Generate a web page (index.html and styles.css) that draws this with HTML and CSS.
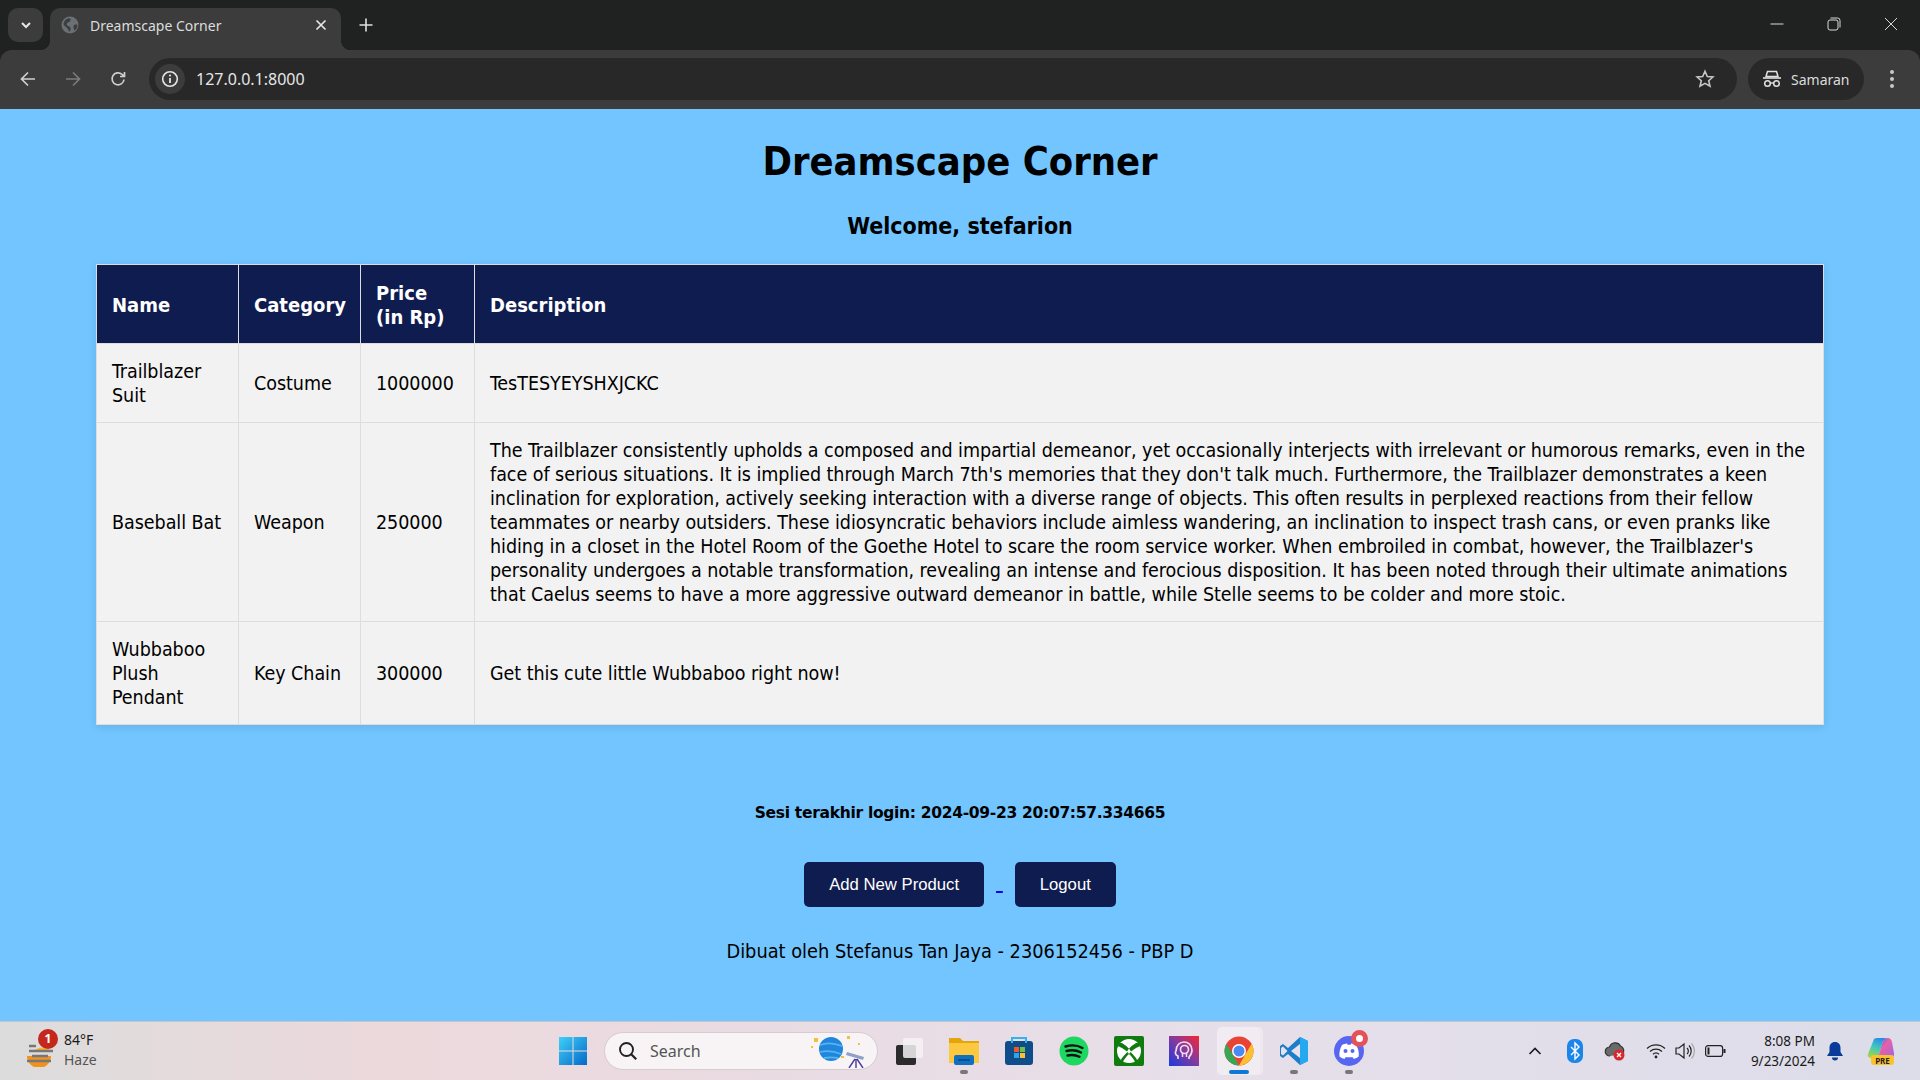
FILE: index.html
```html
<!DOCTYPE html>
<html lang="en">
<head>
<meta charset="utf-8">
<title>Dreamscape Corner</title>
<link rel="stylesheet" href="styles.css">
</head>
<body>
<header class="chrome">
  <div class="tabstrip">
    <button class="tab-search"><svg width="14" height="14" viewBox="0 0 14 14"><path d="M3 5l4 4 4-4" fill="none" stroke="#e6e6e6" stroke-width="2"/></svg></button>
    <div class="tab">
      <svg class="favicon" width="18" height="18" viewBox="0 0 18 18"><circle cx="9" cy="9" r="8.500" fill="#6b7074"/><path d="M7 2.500c2-.5 3 .5 2.500 2s-2.500 1.500-3.500 3 1 2.500 2.500 3 1.500 2.500.5 5H8c-.5-2-1.500-3-2.500-4S3 10 2.500 8C3 5 4.500 3 7 2.500zM13 9c1.500-.7 2.500-.5 3.500 0 0 2.500-1 4.500-3 5.500-1-1.500-1.500-4-.5-5.500z" fill="#3c3f42"/></svg>
      <span class="tab-title">Dreamscape Corner</span>
      <svg class="tab-close" width="12" height="12" viewBox="0 0 12 12"><path d="M1.500 1.500l9 9m0-9l-9 9" stroke="#e6e6e6" stroke-width="1.700"/></svg>
    </div>
    <svg class="newtab" width="14" height="14" viewBox="0 0 14 14"><path d="M7 .5v13M.5 7h13" stroke="#e0e0e0" stroke-width="1.600"/></svg>
    <div class="winctl">
      <svg width="14" height="14" viewBox="0 0 14 14"><path d="M.5 7h13" stroke="#d8d8d8"/></svg>
      <svg width="14" height="14" viewBox="0 0 14 14"><rect x="1" y="3" width="10" height="10" rx="2" fill="none" stroke="#d8d8d8"/><path d="M3.500 1h7A2.500 2.500 0 0 1 13 3.500v7" fill="none" stroke="#d8d8d8"/></svg>
      <svg width="14" height="14" viewBox="0 0 14 14"><path d="M1 1l12 12m0-12L1 13" stroke="#d8d8d8"/></svg>
    </div>
  </div>
  <div class="toolbar">
    <svg class="nav-ic" width="18" height="18" viewBox="0 0 18 18"><path d="M16 9H2.500M9 2.500L2.500 9 9 15.500" fill="none" stroke="#cfcfcf" stroke-width="1.700"/></svg>
    <svg class="nav-ic" width="18" height="18" viewBox="0 0 18 18"><path d="M2 9h13.500M9 2.500L15.500 9 9 15.500" fill="none" stroke="#7b7b7b" stroke-width="1.700"/></svg>
    <svg class="nav-ic" width="18" height="18" viewBox="0 0 18 18"><path d="M15 9.500a6 6 0 1 1-2-5.200L15 6.200M15.500 2v4.500H11" fill="none" stroke="#cfcfcf" stroke-width="1.700"/></svg>
    <div class="omnibox">
      <span class="site-info"><svg width="18" height="18" viewBox="0 0 18 18"><circle cx="9" cy="9" r="7.300" fill="none" stroke="#e6e6e6" stroke-width="1.600"/><path d="M9 8v5" stroke="#e6e6e6" stroke-width="1.800"/><circle cx="9" cy="5.500" r="1.100" fill="#e6e6e6"/></svg></span>
      <span class="url">127.0.0.1:8000</span>
      <svg class="star" width="20" height="20" viewBox="0 0 20 20"><path d="M10 2.300l2.300 5.200 5.600.5-4.200 3.700 1.300 5.500L10 14.400l-5 2.800 1.300-5.500L2.100 8l5.600-.5z" fill="none" stroke="#c7c7c7" stroke-width="1.600"/></svg>
    </div>
    <div class="incognito">
      <svg width="20" height="20" viewBox="0 0 20 20"><path d="M5.500 2.500h9l1.500 5h-12z" fill="none" stroke="#e0e0e0" stroke-width="1.500"/><path d="M1 9h18" stroke="#e0e0e0" stroke-width="1.600"/><circle cx="5.500" cy="14.500" r="2.800" fill="none" stroke="#e0e0e0" stroke-width="1.500"/><circle cx="14.500" cy="14.500" r="2.800" fill="none" stroke="#e0e0e0" stroke-width="1.500"/><path d="M8.300 14h3.400" stroke="#e0e0e0" stroke-width="1.400"/></svg>
      <span>Samaran</span>
    </div>
    <svg class="kebab" width="6" height="20" viewBox="0 0 6 20"><circle cx="3" cy="3" r="2" fill="#c8c8c8"/><circle cx="3" cy="10" r="2" fill="#c8c8c8"/><circle cx="3" cy="17" r="2" fill="#c8c8c8"/></svg>
  </div>
</header>

<main class="page">
  <h1 class="title">Dreamscape Corner</h1>
  <h2 class="welcome">Welcome, stefarion</h2>
  <table class="products">
    <colgroup><col class="c-name"><col class="c-cat"><col class="c-price"><col></colgroup>
    <thead>
      <tr><th>Name</th><th>Category</th><th>Price<br>(in Rp)</th><th>Description</th></tr>
    </thead>
    <tbody>
      <tr><td>Trailblazer<br>Suit</td><td>Costume</td><td>1000000</td><td>TesTESYEYSHXJCKC</td></tr>
      <tr><td>Baseball Bat</td><td>Weapon</td><td>250000</td><td>The Trailblazer consistently upholds a composed and impartial demeanor, yet occasionally interjects with irrelevant or humorous remarks, even in the<br>face of serious situations. It is implied through March 7th's memories that they don't talk much. Furthermore, the Trailblazer demonstrates a keen<br>inclination for exploration, actively seeking interaction with a diverse range of objects. This often results in perplexed reactions from their fellow<br>teammates or nearby outsiders. These idiosyncratic behaviors include aimless wandering, an inclination to inspect trash cans, or even pranks like<br>hiding in a closet in the Hotel Room of the Goethe Hotel to scare the room service worker. When embroiled in combat, however, the Trailblazer's<br>personality undergoes a notable transformation, revealing an intense and ferocious disposition. It has been noted through their ultimate animations<br>that Caelus seems to have a more aggressive outward demeanor in battle, while Stelle seems to be colder and more stoic.</td></tr>
      <tr><td>Wubbaboo<br>Plush<br>Pendant</td><td>Key Chain</td><td>300000</td><td>Get this cute little Wubbaboo right now!</td></tr>
    </tbody>
  </table>
  <p class="session">Sesi terakhir login: 2024-09-23 20:07:57.334665</p>
  <div class="actions"><a class="link-wrap first" href="#"><button class="btn">Add New Product</button> </a><a class="link-wrap second" href="#"><button class="btn">Logout</button></a></div>
  <p class="credit">Dibuat oleh Stefanus Tan Jaya - 2306152456 - PBP D</p>
</main>

<footer class="taskbar">
  <div class="weather">
    <span class="weather-ic">
      <svg width="32" height="32" viewBox="0 0 32 32"><path d="M4 21h24a11 11 0 0 1-24 0z" fill="#f0921e"/><path d="M12 15a13 13 0 0 1 15 0z" fill="#f7b233"/><path d="M6 11h7M6 16h24M9 21h16M4 26h24" stroke="#777" stroke-width="2.600"/></svg>
      <span class="badge">1</span>
    </span>
    <div class="weather-text"><span>84°F</span><span class="muted">Haze</span></div>
  </div>
  <div class="taskcenter">
    <span class="ti"><svg width="30" height="30" viewBox="0 0 30 30"><defs><linearGradient id="w" x1="0" y1="0" x2="1" y2="1"><stop offset="0" stop-color="#3fd0f8"/><stop offset="1" stop-color="#0568c8"/></linearGradient></defs><path fill="url(#w)" d="M1 1h13.500v13.500H1zM15.500 1H29v13.500H15.500zM1 15.500h13.500V29H1zM15.500 15.500H29V29H15.500z"/></svg></span>
    <div class="searchbox">
      <svg width="20" height="20" viewBox="0 0 20 20"><circle cx="8.500" cy="8.500" r="6.500" fill="none" stroke="#222" stroke-width="1.900"/><path d="M13.200 13.200l5 5" stroke="#222" stroke-width="2.200"/></svg>
      <span class="searchlabel">Search</span>
      <svg class="search-art" width="56" height="34" viewBox="0 0 56 34"><circle cx="20" cy="15" r="12" fill="#1f86dc"/><path d="M9 11c8-3 14-2 22 1M9 18c8-2 14-1 21 2M13 24c5-1 9-1 14 0" fill="none" stroke="#58b2f0" stroke-width="1.800"/><path d="M3 4h4v4H3zM36 2l3 0 0 3-3 0zM47 9h2v2h-2zM30 22h3v2h-3zM0 12h2v2H0z" fill="#eec23e"/><path d="M36 18l17 5-1 3-17-5z" fill="#8fa0c8"/><path d="M44 25l-6 9M45 25v9M46 25l6 9" stroke="#4a3a9a" stroke-width="1.400"/></svg>
    </div>
    <span class="ti"><svg width="30" height="30" viewBox="0 0 30 30"><rect x="2" y="9" width="20" height="20" rx="2" fill="#2b2b2b"/><rect x="9" y="2" width="20" height="20" rx="2" fill="#f4f2f4" fill-opacity=".85"/></svg></span>
    <span class="ti"><svg width="32" height="32" viewBox="0 0 32 32"><path d="M1 3h11l3 3h16v6H1z" fill="#e3a40c"/><path d="M1 8h30v20H1z" fill="#fcc83f"/><rect x="6" y="20" width="20" height="10" rx="2" fill="#0f70c0"/><path d="M10 25h12" stroke="#0a4f90" stroke-width="2"/></svg><i class="dot"></i></span>
    <span class="ti"><svg width="30" height="30" viewBox="0 0 30 30"><rect x="1" y="5" width="28" height="24" rx="3" fill="#0f4c8a"/><path d="M8 7V2h14v5" fill="none" stroke="#2fb4f0" stroke-width="2"/><rect x="10" y="11" width="5" height="5" fill="#ee5a24"/><rect x="16" y="11" width="5" height="5" fill="#6cc24a"/><rect x="10" y="17" width="5" height="5" fill="#2aa6e8"/><rect x="16" y="17" width="5" height="5" fill="#fcc22d"/></svg></span>
    <span class="ti"><svg width="30" height="30" viewBox="0 0 30 30"><circle cx="15" cy="15" r="14.500" fill="#1ed760"/><path d="M6.500 10.500c6-1.800 12-1.300 17 1.500M7.500 15c5-1.300 10-.9 14.500 1.500M8.500 19.500c4-1 8-.7 12 1.300" fill="none" stroke="#121212" stroke-width="2.400" stroke-linecap="round"/></svg></span>
    <span class="ti"><svg width="30" height="30" viewBox="0 0 30 30"><rect width="30" height="30" rx="2" fill="#107c10"/><circle cx="15" cy="15" r="12" fill="#fff"/><path d="M15 12.500C12 9.500 8 6.500 5.500 6.500L3 10c3 .5 7 3 10 5.500zM15 12.500c3-3 7-6 9.500-6L27 10c-3 .5-7 3-10 5.500zM13.500 16C10 19 7 23 6.500 25l2 1.500C10 23.500 12.500 20 15 18zM16.500 16c3.500 3 6.500 7 7 9l-2 1.500C20 23.500 17.500 20 15 18z" fill="#107c10"/></svg></span>
    <span class="ti"><svg width="30" height="30" viewBox="0 0 30 30"><defs><linearGradient id="p" x1="0" y1="1" x2="1" y2="0"><stop offset="0" stop-color="#1a3ae0"/><stop offset=".55" stop-color="#8a3a9a"/><stop offset="1" stop-color="#f8242f"/></linearGradient></defs><rect width="30" height="30" fill="url(#p)"/><path d="M9 23v-3c-3-1-3-4-2-5 0-6 4-9 8-9s8 3 8 8c0 4-2 6-3 7v2" fill="none" stroke="#f0dcec" stroke-width="1.700"/><circle cx="15.500" cy="13.500" r="4" fill="none" stroke="#f0dcec" stroke-width="1.700"/><path d="M13.500 17v4M17.500 17v4" stroke="#f0dcec" stroke-width="1.500"/></svg></span>
    <span class="ti active"><svg width="30" height="30" viewBox="0 0 30 30"><circle cx="15" cy="15" r="14.500" fill="#ea4335"/><path d="M27.600 7.800A14.500 14.500 0 0 1 15 29.500l6.300-11z" fill="#fbc02d"/><path d="M2.400 7.800L8.700 18.500 15 29.500A14.500 14.500 0 0 1 2.400 7.800z" fill="#34a853"/><circle cx="15" cy="15" r="7" fill="#fff"/><circle cx="15" cy="15" r="5.500" fill="#4a8af4"/></svg><i class="dot on"></i></span>
    <span class="ti"><svg width="30" height="30" viewBox="0 0 30 30"><path d="M21 1l8 4v20l-8 4-12-11-5 4-3-2v-10l3-2 5 4z" fill="#1c7ec8"/><path d="M21 1v28l8-4V5z" fill="#24a8f0"/><path d="M21 8v14l-9-7z" fill="#e8e0ec"/><path d="M4 10.500l4.500 4.500L4 19.500 2 18v-6z" fill="#e8e0ec"/></svg><i class="dot"></i></span>
    <span class="ti"><svg width="30" height="30" viewBox="0 0 30 30"><circle cx="15" cy="15" r="15" fill="#5865f2"/><path d="M8 9c2-1 4-1.500 5-1.500l.6 1.200h3l.6-1.200c1 0 3 .5 5 1.500 2 3.500 3 7.500 2.500 11.500-2 1.500-3.500 2-5 2.500l-1-1.800H11.500l-1 1.800c-1.500-.5-3-1-5-2.500C5 16.500 6 12.500 8 9z" fill="#fff"/><circle cx="11.500" cy="15" r="2" fill="#5865f2"/><circle cx="18.500" cy="15" r="2" fill="#5865f2"/></svg><i class="dot"></i><b class="notif"></b></span>
  </div>
  <div class="tray">
    <svg class="tray-caret" width="14" height="14" viewBox="0 0 14 14"><path d="M1.500 10L7 4.500 12.500 10" fill="none" stroke="#1a1a1a" stroke-width="1.600"/></svg>
    <svg class="tray-bt" width="16" height="24" viewBox="0 0 16 24"><rect width="16" height="24" rx="7" fill="#1a86ea"/><path d="M4 8l8 8-4 4V4l4 4-8 8" fill="none" stroke="#fff" stroke-width="1.400"/></svg>
    <svg class="tray-cloud" width="22" height="20" viewBox="0 0 22 20"><path d="M6 15a4.500 4.500 0 0 1-.5-9 6 6 0 0 1 11-1 5 5 0 0 1 2 8" fill="#6a6a6a" stroke="#333" stroke-width="1.200"/><circle cx="15" cy="14" r="5.500" fill="#d8262c"/><path d="M13 12l4 4m0-4l-4 4" stroke="#fff" stroke-width="1.400"/></svg>
    <svg class="tray-wifi" width="20" height="16" viewBox="0 0 20 16"><path d="M1 5.500a13 13 0 0 1 18 0M4 8.500a9 9 0 0 1 12 0M7 11.300a4.500 4.500 0 0 1 6 0" fill="none" stroke="#222" stroke-width="1.200"/><circle cx="10" cy="14" r="1.400" fill="#222"/></svg>
    <svg class="tray-vol" width="20" height="18" viewBox="0 0 20 18"><path d="M1 6h3l5-4v14l-5-4H1z" fill="none" stroke="#222" stroke-width="1.200"/><path d="M12 6a4 4 0 0 1 0 6M14 3.500a8 8 0 0 1 0 11" fill="none" stroke="#222" stroke-width="1.200"/><path d="M16.500 1.500a11 11 0 0 1 0 15" fill="none" stroke="#aaa" stroke-width="1.200"/></svg>
    <svg class="tray-bat" width="21" height="14" viewBox="0 0 21 14"><rect x=".6" y="1.600" width="17" height="10.800" rx="2.500" fill="none" stroke="#222" stroke-width="1.200"/><rect x="2.500" y="3.500" width="2" height="7" fill="#222"/><rect x="18.500" y="5" width="2" height="4" fill="#222"/></svg>
    <div class="clock"><span>8:08 PM</span><span>9/23/2024</span></div>
    <svg class="tray-bell" width="18" height="20" viewBox="0 0 18 20"><path d="M9 1c3.500 0 5.500 2.500 5.500 6v4l2.500 4H1l2.500-4V7C3.500 3.500 5.500 1 9 1z" fill="#0a3a9a"/><path d="M6 16.500h6a3 3 0 0 1-6 0z" fill="#0a3a9a"/></svg>
    <svg class="tray-copilot" width="30" height="32" viewBox="0 0 30 32"><defs><linearGradient id="c1" x1="0.600" y1="0" x2="0.200" y2="1"><stop offset="0" stop-color="#2a8ae8"/><stop offset=".45" stop-color="#3cc8c0"/><stop offset="1" stop-color="#a8d83c"/></linearGradient><linearGradient id="c2" x1="0" y1="0" x2="1" y2="1"><stop offset="0" stop-color="#2a70e0"/><stop offset=".4" stop-color="#e860a8"/><stop offset="1" stop-color="#9a68e0"/></linearGradient></defs><path d="M9 4L3 19c-1 3 1 4 4 4h6l4-14c1-4 4-6 6-6H13c-2 0-3 0-4 1z" fill="url(#c1)"/><path d="M23 3c2 0 3 1 4 4l2 11c.5 3-1 5-4 5H13l4-14c1-4 3-6 6-6z" fill="url(#c2)"/><rect x="6" y="20" width="23" height="10" rx="3" fill="#fcc22d"/><text x="17.500" y="28.500" class="pre">PRE</text></svg>
  </div>
</footer>
</body>
</html>
```

FILE: styles.css
```css
* { box-sizing: border-box; }
html, body { margin: 0; height: 100%; }
body {
  display: flex;
  flex-direction: column;
  height: 100vh;
  overflow: hidden;
  font-family: "DejaVu Sans Condensed", "DejaVu Sans", sans-serif;
  background: #72c5ff;
}

/* Browser chrome */
.chrome { flex: none; background: #202222; font-family: "Noto Sans", sans-serif; color: #e6e6e6; }
.tabstrip {
  height: 50px;
  background: #202222;
  display: flex;
  align-items: flex-start;
  padding: 8px 0 0 8px;
  position: relative;
}
.tab-search {
  width: 35px;
  height: 34px;
  border: 0;
  padding: 0;
  border-radius: 10px;
  background: #3c3c3c;
  display: flex;
  align-items: center;
  justify-content: center;
}
.tab {
  width: 291px;
  height: 42px;
  margin-left: 7px;
  background: #3c3c3c;
  border-radius: 10px 10px 0 0;
  display: flex;
  align-items: center;
  padding: 0 11px 8px;
  position: relative;
}
.tab::before, .tab::after {
  content: "";
  position: absolute;
  bottom: 0;
  width: 10px;
  height: 10px;
}
.tab::before { left: -10px; background: radial-gradient(circle at 0 0, #202222 10px, #3c3c3c 10.500px); }
.tab::after { right: -10px; background: radial-gradient(circle at 100% 0, #202222 10px, #3c3c3c 10.500px); }
.favicon { flex: none; }
.tab-title { margin-left: 11px; font-size: 14px; flex: 1; white-space: nowrap; color: #dcdcdc; }
.tab-close { flex: none; margin-right: 3px; }
.newtab { margin: 10px 0 0 18px; }
.winctl {
  margin-left: auto;
  display: flex;
  gap: 43px;
  padding: 9px 22px 0 0;
}
.toolbar {
  height: 59px;
  background: #3c3c3c;
  border-radius: 12px 12px 0 0;
  display: flex;
  align-items: center;
  padding: 0 25px 1px 19px;
}
.nav-ic { margin-right: 27px; flex: none; }
.nav-ic:nth-of-type(3) { margin-right: 22px; }
.omnibox {
  flex: 1;
  height: 42px;
  border-radius: 21px;
  background: #282828;
  display: flex;
  align-items: center;
  padding: 0 22px 0 6px;
}
.site-info {
  width: 30px;
  height: 30px;
  border-radius: 50%;
  background: #3c3c3c;
  display: flex;
  align-items: center;
  justify-content: center;
}
.url { margin-left: 11px; font-size: 16px; color: #e6e6e6; flex: 1; }
.incognito {
  width: 116px;
  height: 42px;
  margin: 0 25px 0 11px;
  border-radius: 21px;
  background: #282828;
  display: flex;
  align-items: center;
  gap: 9px;
  padding-left: 14px;
  font-size: 14px;
  color: #dcdcdc;
}
.kebab { flex: none; }

/* Page */
.page {
  flex: 1;
  min-height: 0;
  display: flex;
  flex-direction: column;
  align-items: center;
  padding-top: 28px;
  color: #000;
}
.title { margin: 0; font-size: 39.500px; line-height: 48px; font-weight: 700; }
.welcome { margin: 27px 0 0; font-size: 23px; line-height: 29px; font-weight: 700; }
.products {
  margin-top: 23px;
  width: 1728px;
  border-collapse: collapse;
  table-layout: fixed;
  background: #f2f2f2;
  box-shadow: 0 2px 8px rgba(0, 0, 0, .1);
  font-size: 19.500px;
  letter-spacing: -.04px;
  line-height: 24px;
}
.c-name { width: 142px; }
.c-cat { width: 122px; }
.c-price { width: 114px; }
.products th, .products td {
  padding: 16px 15px 14px;
  text-align: left;
  white-space: nowrap;
  vertical-align: middle;
}
.products th {
  background: #0f1c4f;
  color: #fff;
  border: 1px solid #ddd;
  font-size: 20px;
  letter-spacing: 0;
  font-weight: 700;
}
.products td { border: 1px solid #ddd; }
.session { margin: 78px 0 0; font-size: 15.500px; line-height: 20px; font-weight: 700; font-family: "DejaVu Sans", sans-serif; letter-spacing: -.3px; }
.actions { margin-top: 39px; font-size: 20px; word-spacing: 1px; }
.link-wrap { color: #00e; white-space: pre; }
.first .btn { margin-right: 12px; }
.second { margin-left: 12px; }
.btn {
  height: 45px;
  padding: 0 25px;
  border: 0;
  border-radius: 5px;
  background: #0f1c4f;
  color: #fff;
  font-family: "Liberation Sans", sans-serif;
  font-size: 16.700px;
}
.credit { margin: 33px 0 0; font-size: 19.800px; line-height: 24px; }

/* Taskbar */
.taskbar {
  flex: none;
  height: 59px;
  display: flex;
  align-items: center;
  background: linear-gradient(90deg, #dcdcdc 0, #ecd9dc 20%, #e9dce4 45%, #e6dfea 65%, #dcdde9 100%);
  border-top: 1px solid #c8c4c8;
  font-family: "Noto Sans", sans-serif;
}
.weather { width: 545px; flex: none; display: flex; align-items: center; padding-left: 23px; font-size: 14px; line-height: 20px; color: #1a1a1a; }
.weather-ic { position: relative; width: 32px; height: 32px; display: block; }
.badge {
  position: absolute;
  left: 15px;
  top: -6px;
  width: 20px;
  height: 20px;
  border-radius: 50%;
  background: #c4281c;
  color: #fff;
  font-size: 12px;
  font-weight: 700;
  line-height: 20px;
  text-align: center;
}
.weather-text { display: flex; flex-direction: column; margin-left: 9px; margin-top: -2px; }
.muted { color: #555; }
.taskcenter { display: flex; align-items: center; }
.ti {
  position: relative;
  width: 55px;
  height: 48px;
  display: flex;
  align-items: center;
  justify-content: center;
  border-radius: 5px;
  flex: none;
}
.ti.active { background: #f1ecf1; box-shadow: 3px 0 0 #efe8ef; width: 43px; margin: 0 6px; }
.dot {
  position: absolute;
  bottom: 1px;
  left: 50%;
  width: 8px;
  height: 4px;
  margin-left: -4px;
  border-radius: 2px;
  background: #777;
}
.dot.on { width: 20px; margin-left: -10px; background: #0f78d4; }
.notif {
  position: absolute;
  right: 8px;
  top: 3px;
  width: 17px;
  height: 17px;
  border-radius: 50%;
  background: #e35258;
  border: 5px solid #e35258;
}
.notif::after {
  content: "";
  display: block;
  width: 7px;
  height: 7px;
  border-radius: 50%;
  background: #fff;
}
.searchbox {
  width: 274px;
  height: 38px;
  margin: 0 3px 0 4px;
  border-radius: 19px;
  background: #f8f4f6;
  border: 1px solid #d4ccd0;
  display: flex;
  align-items: center;
  padding: 0 10px 0 13px;
  gap: 12px;
  color: #555;
  font-size: 16px;
}
.searchlabel { flex: 1; }
.tray { flex: 1; display: flex; align-items: center; justify-content: flex-end; padding-right: 25px; }
.tray-bt { margin-left: 25px; }
.tray-cloud { margin-left: 21px; }
.tray-wifi { margin-left: 20px; }
.tray-vol { margin-left: 9px; }
.tray-bat { margin-left: 10px; }
.clock { margin-left: 15px; width: 74px; display: flex; flex-direction: column; align-items: flex-end; font-size: 13.500px; line-height: 20px; color: #1a1a1a; }
.tray-bell { margin-left: 11px; }
.tray-copilot { margin-left: 21px; }
.pre { font: 700 8px "Noto Sans", sans-serif; text-anchor: middle; fill: #222; }
```
